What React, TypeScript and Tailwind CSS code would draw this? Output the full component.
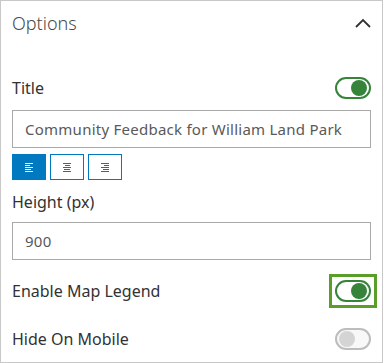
import { useState } from 'react'

function Toggle({ on, focused }: { on: boolean; focused?: boolean }) {
  return (
    <div
      className={
        focused
          ? 'flex h-[34px] w-[48px] items-center justify-center border-[3px] border-[#5a9e2a]'
          : 'flex h-[34px] w-[48px] items-center justify-center'
      }
    >
      <div
        className={
          on
            ? 'flex h-[22px] w-[36px] items-center justify-end rounded-full border-2 border-[#35843a] bg-white px-[2px]'
            : 'flex h-[22px] w-[36px] items-center justify-start rounded-full border-2 border-[#bdbdbd] bg-[#f8f8f8] px-[2px]'
        }
      >
        <div
          className={
            on
              ? 'h-[16px] w-[16px] rounded-full bg-[#35843a]'
              : 'h-[16px] w-[16px] rounded-full bg-[#d4d4d4]'
          }
        />
      </div>
    </div>
  )
}

function AlignIcon({ kind }: { kind: 'left' | 'center' | 'right' }) {
  const rows = [8, 5, 8, 6, 8]
  return (
    <svg width="10" height="9" viewBox="0 0 10 9" shapeRendering="crispEdges">
      {rows.map((w, i) => {
        const x = kind === 'left' ? 1 : kind === 'center' ? Math.round((10 - w) / 2) : 9 - w
        return <rect key={i} x={x} y={i * 2} width={w} height="1" fill="currentColor" />
      })}
    </svg>
  )
}

export default function App() {
  const [align, setAlign] = useState<'left' | 'center' | 'right'>('left')
  return (
    <div
      className="h-[363px] w-[383px] border border-[#c8c8c8] bg-white text-[#323232]"
      style={{ fontFamily: '"Noto Sans", "Open Sans", Arial, sans-serif' }}
    >
      <div className="flex h-[44px] items-center justify-between pl-[11px] pr-[10px]">
        <span className="text-[18px] font-light text-[#4a4a4a]">Options</span>
        <svg width="18" height="12" viewBox="0 0 18 12">
          <path d="M2 10 L9 3 L16 10" fill="none" stroke="#323232" strokeWidth="1.8" />
        </svg>
      </div>

      <div className="flex flex-col px-[11px] pt-[31px]">
        <div className="flex h-[24px] items-center justify-between">
          <span className="text-[16px]">Title</span>
          <div className="-mr-[6px]">
            <Toggle on />
          </div>
        </div>

        <div className="mt-[10px] flex h-[38px] items-center border border-[#a9a9a9] px-[12px] text-[15px] tracking-[0.25px] text-[#595959]">
          Community Feedback for William Land Park
        </div>

        <div className="mt-[6px] flex gap-[4px]">
          {(['left', 'center', 'right'] as const).map((k) => (
            <button
              key={k}
              onClick={() => setAlign(k)}
              className={
                align === k
                  ? 'flex h-[26px] w-[34px] items-center justify-center bg-[#0079c1] text-white'
                  : 'flex h-[26px] w-[34px] items-center justify-center border border-[#0079c1] bg-white text-[#0079c1]'
              }
            >
              <AlignIcon kind={k} />
            </button>
          ))}
        </div>

        <span className="mt-[10px] text-[16px] leading-[24px]">Height (px)</span>
        <div className="mt-[8px] flex h-[38px] items-center border border-[#a9a9a9] px-[12px] text-[15px] tracking-[0.25px] text-[#595959]">
          900
        </div>

        <div className="mt-[14px] flex h-[34px] items-center justify-between">
          <span className="text-[16px]">Enable Map Legend</span>
          <div className="-mr-[6px]">
            <Toggle on focused />
          </div>
        </div>

        <div className="mt-[19px] flex h-[24px] items-center justify-between">
          <span className="text-[16px]">Hide On Mobile</span>
          <div className="-mr-[6px]">
            <Toggle on={false} />
          </div>
        </div>
      </div>
    </div>
  )
}
